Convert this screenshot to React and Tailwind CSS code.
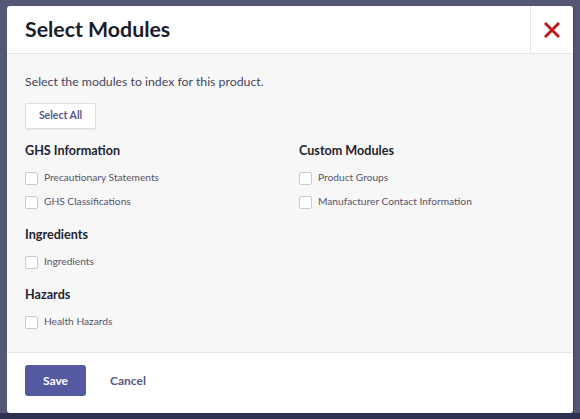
import React from "react";

function Check({ label }) {
  return (
    <label className="flex items-center h-[24px] gap-[6px]">
      <span className="w-[13px] h-[13px] bg-white border border-[#c9c9d2] rounded-[2px] shrink-0" />
      <span className="text-[10.2px] text-[#55556a]">{label}</span>
    </label>
  );
}

function Section({ title, items, className = "" }) {
  return (
    <div className={className}>
      <div className="text-[12.6px] font-bold text-[#1f1f2e] h-[20px] leading-[20px]">{title}</div>
      <div className="mt-[5px] flex flex-col">
        {items.map((i) => (
          <Check key={i} label={i} />
        ))}
      </div>
    </div>
  );
}

export default function App() {
  return (
    <div
      className="w-[580px] h-[419px] bg-[#555875] flex flex-col"
      style={{ fontFamily: "Lato, 'Open Sans', sans-serif" }}
    >
      <div className="flex-1 pt-[6px] pl-[7px] pr-[7px]">
        <div className="w-[566px] h-[407px] bg-white rounded-[3px] flex flex-col overflow-hidden shadow-[1px_1px_2px_rgba(0,0,0,0.25)]">
          <div className="h-[48px] flex border-b border-[#e4e4ea] shrink-0">
            <div className="flex-1 flex items-center pl-[18px] text-[21.3px] font-bold text-[#1c1c2c]">
              Select Modules
            </div>
            <div className="w-[43px] border-l border-[#e4e4ea] flex items-center justify-center">
              <svg width="16" height="16" viewBox="0 0 16 16">
                <path d="M2 2 L14 14 M14 2 L2 14" stroke="#c11b22" strokeWidth="3" strokeLinecap="square" />
              </svg>
            </div>
          </div>
          <div className="flex-1 bg-[#f7f7f7] pl-[18px] pt-[19px]">
            <div className="text-[12.3px] text-[#45455a] leading-[18px]">
              Select the modules to index for this product.
            </div>
            <button className="mt-[12px] h-[26px] w-[71px] bg-white border border-[#dedee4] rounded-[2px] text-[10.5px] font-bold text-[#57578a] shadow-[0_1px_1px_rgba(0,0,0,0.06)]">
              Select All
            </button>
            <div className="mt-[12px] flex">
              <div className="w-[274px] flex flex-col gap-[11px]">
                <Section title="GHS Information" items={["Precautionary Statements", "GHS Classifications"]} />
                <Section title="Ingredients" items={["Ingredients"]} />
                <Section title="Hazards" items={["Health Hazards"]} />
              </div>
              <div className="flex-1">
                <Section title="Custom Modules" items={["Product Groups", "Manufacturer Contact Information"]} />
              </div>
            </div>
          </div>
          <div className="h-[61px] border-t border-[#e4e4ea] shrink-0 flex items-start pt-[12px] pl-[18px] gap-[24px]">
            <button className="w-[61px] h-[31px] bg-[#5559a2] rounded-[3px] text-white text-[12px] font-bold">
              Save
            </button>
            <button className="h-[31px] text-[12px] font-bold text-[#57578a]">Cancel</button>
          </div>
        </div>
      </div>
      <div className="h-[6px] bg-[#2f3150]" />
    </div>
  );
}
